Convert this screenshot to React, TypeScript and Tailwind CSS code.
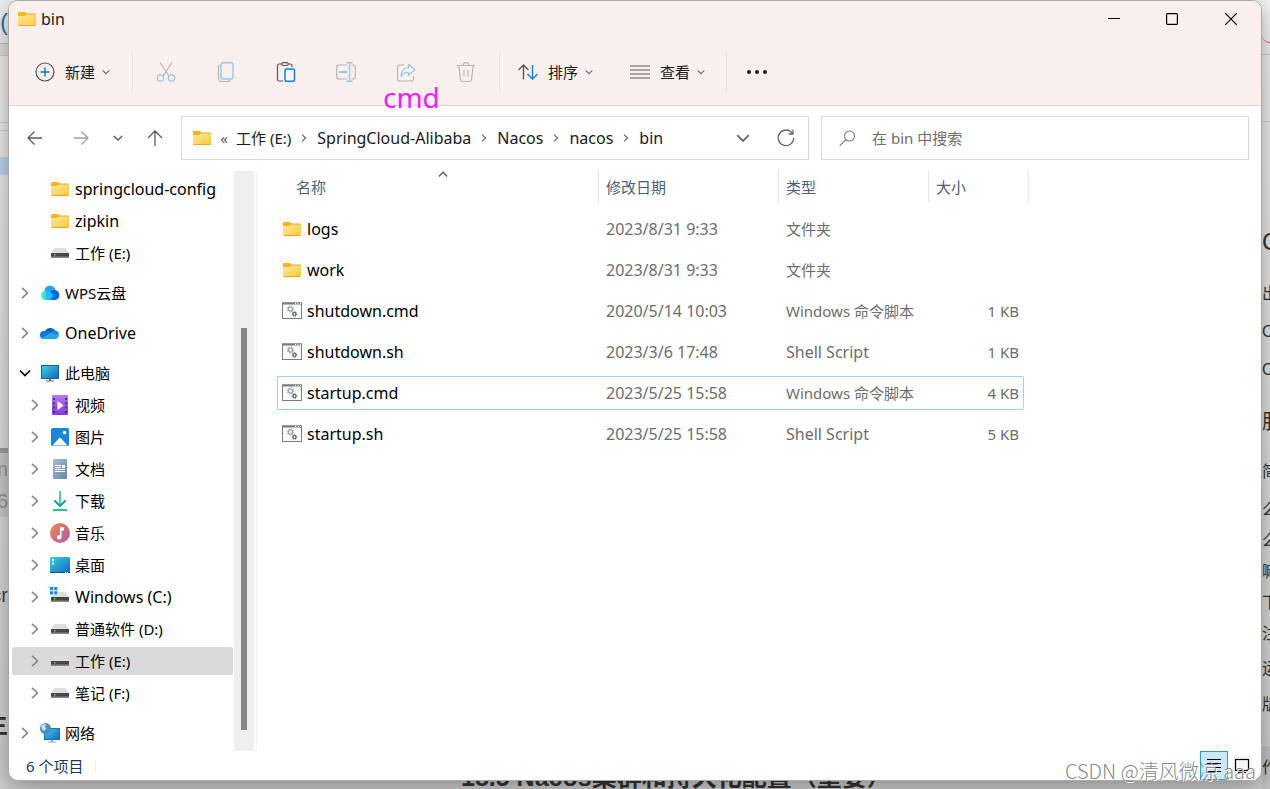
import React from 'react';
import { clsx } from 'clsx';

interface IconProps {
  className?: string;
}

const Chevron = ({ d, className, size = 12 }: IconProps & { d: string; size?: number }) => (
  <svg width={size} height={size} viewBox="0 0 12 12" fill="none" stroke="currentColor" strokeWidth="1.6" className={clsx('shrink-0', className)}>
    <path d={d} />
  </svg>
);

const RIGHT = 'M3 .8 8.500 6 3 11.200';
const DOWN = 'M1 3.500 6 8.500 11 3.500';
const UP = 'M1 6.500 6 1.500 11 6.500';

const FolderIcon = () => (
  <svg width="20" height="20" viewBox="0 0 20 20" className="shrink-0">
    <defs>
      <linearGradient id="folder" x1="0" y1="0" x2="1" y2="1">
        <stop offset="0" stopColor="#ffe8a0" />
        <stop offset="1" stopColor="#ffca3a" />
      </linearGradient>
    </defs>
    <path d="M1 4q0-1 1-1h6l1.500 1.500V7H1z" fill="#f9b515" />
    <path d="M9 4.500h9q1 0 1 1V7H9z" fill="#e9a91c" />
    <path d="M1 7h6.500l1.500-1.500h10V15.500q0 1-1 1H2q-1 0-1-1z" fill="url(#folder)" />
    <path d="M1.300 16.500h17.400" stroke="#e8a82e" />
  </svg>
);

const DriveIcon = ({ windows = false }: { windows?: boolean }) => (
  <svg width="20" height="20" viewBox="0 0 20 20" className="shrink-0">
    <path d="M4.500 5h11l3.500 5H1z" fill="#dedee2" />
    <path d="M1 10h18v4H1z" fill="#454545" />
    <path d="M1 13.500h18v1.500H1z" fill="#8a8a8a" />
    <path d="M4 11h1.500v1.500H4z" fill="#3ee65a" />
    {windows && (
      <>
        <path d="M0 0h8.500v8H0z" fill="#fff" />
        <path d="M0 0h3.200v3.200H0zM4.200 0h3.200v3.200H4.200zM0 4.200h3.200v3.200H0zM4.200 4.200h3.200v3.200H4.200z" fill="#1193dd" />
      </>
    )}
  </svg>
);

const WpsIcon = () => (
  <svg width="20" height="20" viewBox="0 0 20 20" className="shrink-0">
    <defs>
      <linearGradient id="wps" x1="0" y1="0" x2="1" y2="0">
        <stop offset="0" stopColor="#4df0b8" />
        <stop offset="1" stopColor="#12b5fa" />
      </linearGradient>
    </defs>
    <circle cx="10" cy="8" r="5.500" fill="#1fa5f5" />
    <circle cx="14.300" cy="12" r="5" fill="#0a63e0" />
    <path d="M5.500 17a4.700 4.700 0 1 1 3-8.500l5 6Q15 17 12 17z" fill="url(#wps)" />
    <path d="M11 17h4q3-.3 4-3l-6-5.500-4 4z" fill="#0b6cea" />
    <path d="M6 8.200Q9 7 11.500 10L13.500 13 9.500 17H6z" fill="#1cc0f6" />
  </svg>
);

const OneDriveIcon = () => (
  <svg width="20" height="20" viewBox="0 0 20 20" className="shrink-0">
    <path d="M5 8a6 6 0 0 1 10.500 0l-5 4z" fill="#0a5fb4" />
    <path d="M4 16A4 4 0 0 1 4 8q3-1 6 1l5 3-9 4z" fill="#0f79d3" />
    <path d="M15 7.500A4.400 4.400 0 0 1 16 16H4q-1.500 0-2.500-1L12 9.500z" fill="#2aa5ec" />
    <path d="M10 9q2-2 5-1.500 3 .3 4 3l-4 1.500z" fill="#1688dc" />
  </svg>
);

const PcIcon = () => (
  <svg width="20" height="20" viewBox="0 0 20 20" className="shrink-0">
    <defs>
      <linearGradient id="screen" x1="0" y1="0" x2="1" y2="1">
        <stop offset="0" stopColor="#39d2e4" />
        <stop offset="1" stopColor="#1268bc" />
      </linearGradient>
    </defs>
    <rect x="1.500" y="2.500" width="17" height="13" fill="url(#screen)" stroke="#17618c" />
    <path d="M9 16h2v1.500h3v1H6v-1h3z" fill="#5d6d78" />
  </svg>
);

const VideoIcon = () => (
  <svg width="20" height="20" viewBox="0 0 20 20" className="shrink-0">
    <defs>
      <linearGradient id="video" x1="0" y1="0" x2="0" y2="1">
        <stop offset="0" stopColor="#b679f5" />
        <stop offset="1" stopColor="#8438dc" />
      </linearGradient>
    </defs>
    <rect x="2" y="0" width="16" height="20" rx="1" fill="url(#video)" />
    <path d="M4 3v15M16 3v15" stroke="#3a1a68" strokeWidth="1.500" strokeDasharray="2 2.300" />
    <path d="M7.500 6v9l6-4.500z" fill="#fff" />
  </svg>
);

const PictureIcon = () => (
  <svg width="20" height="20" viewBox="0 0 20 20" className="shrink-0">
    <rect x="1" y="1" width="18" height="18" rx="1.500" fill="#1487d9" />
    <path d="M2.500 18.500 9.300 11q.7-.8 1.400 0l6.800 7.500z" fill="#fff" />
    <circle cx="14.500" cy="5.500" r="1.700" fill="#fff" />
  </svg>
);

const DocIcon = () => (
  <svg width="20" height="20" viewBox="0 0 20 20" className="shrink-0">
    <defs>
      <linearGradient id="doc" x1="0" y1="0" x2="1" y2="1">
        <stop offset="0" stopColor="#a9bdd2" />
        <stop offset="1" stopColor="#6784a2" />
      </linearGradient>
    </defs>
    <rect x="3" y="0" width="14" height="20" rx="1" fill="url(#doc)" />
    <path d="M5 6.500h6M5 8.500h6M5 10.500h10M5 12.500h10" stroke="#fff" />
    <path d="M12 6h3v3h-3z" fill="#fff" />
  </svg>
);

const DownloadIcon = () => (
  <svg width="20" height="20" viewBox="0 0 20 20" fill="none" className="shrink-0">
    <path d="M10 0v15" stroke="#2bbd95" strokeWidth="1.600" />
    <path d="M4.500 9.500 10 15l5.500-5.500" stroke="#15a08c" strokeWidth="2" />
    <path d="M3 19h14" stroke="#2fc08e" strokeWidth="2" />
  </svg>
);

const MusicIcon = () => (
  <svg width="20" height="20" viewBox="0 0 20 20" className="shrink-0">
    <defs>
      <linearGradient id="music" x1="0" y1="0" x2="1" y2="1">
        <stop offset="0" stopColor="#f28a4e" />
        <stop offset="1" stopColor="#a95aa8" />
      </linearGradient>
    </defs>
    <circle cx="10" cy="10" r="10" fill="url(#music)" />
    <path d="M10 4v8.300a2.300 2.200 0 1 0 1.500 2V7.500H14V4.500z" fill="#fff" />
  </svg>
);

const DesktopIcon = () => (
  <svg width="20" height="20" viewBox="0 0 20 20" className="shrink-0">
    <rect x="0" y="2" width="20" height="16" rx="1" fill="url(#screen)" />
    <path d="M0 17h20v1H0z" fill="#0d518f" />
    <path d="M2 4h2v2H2zM2 7.500h2v2H2zM15 17h1v1h-1zM17 17h1v1h-1z" fill="#fff" />
  </svg>
);

const NetworkIcon = () => (
  <svg width="20" height="20" viewBox="0 0 20 20" className="shrink-0">
    <rect x="4.500" y="5.500" width="15" height="11" fill="url(#screen)" stroke="#1874a8" />
    <path d="M11 17h2v1.500h3v1H8v-1h3z" fill="#9aa5ad" />
    <circle cx="5.500" cy="5.500" r="5.500" fill="#4f8db8" />
    <path d="M1 3q3-3 5-1.500L5 4l1.500 1.500L4 8Q1 6 1 3z" fill="#c5dfec" />
  </svg>
);

const ScriptIcon = () => (
  <svg width="20" height="20" viewBox="0 0 20 20" fill="none" className="shrink-0">
    <rect x=".5" y="2" width="19" height="15.500" fill="#fafafa" stroke="#7b7b79" />
    <path d="M0 2.500h20" stroke="#7b7b79" strokeWidth="2" />
    <path d="M13 2.500h6" stroke="#fff" strokeDasharray="1 1.500" />
    <circle cx="8.500" cy="8" r="2.100" stroke="#9aa3ad" strokeWidth="1.300" />
    <circle cx="8.500" cy="8" r="3.200" stroke="#9aa3ad" strokeDasharray="1.200 1.310" />
    <circle cx="12.500" cy="13" r="1.500" stroke="#555d63" strokeWidth="1.200" />
    <circle cx="12.500" cy="13" r="2.300" stroke="#555d63" strokeDasharray=".9 .900" />
  </svg>
);

const tool = { width: 20, height: 20, viewBox: '0 0 20 20', fill: 'none', strokeWidth: 1.2, className: 'shrink-0' };

const PlusCircle = () => (
  <svg {...tool}>
    <circle cx="10" cy="10" r="9" stroke="#55504f" />
    <path d="M10 5.500v9M5.500 10h9" stroke="#0a72cc" strokeWidth="1.400" />
  </svg>
);

const CutIcon = () => (
  <svg {...tool}>
    <path d="M4 .5 13 14M16 .5 7 14" stroke="#bab4b3" />
    <circle cx="4.500" cy="16" r="3.200" stroke="#97c6ea" />
    <circle cx="15.500" cy="16" r="3.200" stroke="#97c6ea" />
  </svg>
);

const CopyIcon = () => (
  <svg {...tool}>
    <path d="M4 3Q2.500 3.500 2.500 5v11q0 3.500 3.500 3.500h5.500q2 0 2.500-1.500" stroke="#bab4b3" />
    <rect x="5" y=".7" width="12" height="16.300" rx="2" stroke="#97c6ea" strokeWidth="1.400" />
  </svg>
);

const PasteIcon = () => (
  <svg {...tool}>
    <path d="M6 2H3Q1.500 2 1.500 3.500v14Q1.500 19 3 19h4M12 2h2.500Q16 2 16 3.500V5" stroke="#5d5857" />
    <rect x="5.700" y=".7" width="6.600" height="2.800" rx="1.400" stroke="#5d5857" />
    <rect x="9" y="7" width="9.500" height="12.300" rx="1.500" fill="#f4f8fd" stroke="#0f7fdb" strokeWidth="1.500" />
  </svg>
);

const RenameIcon = () => (
  <svg {...tool}>
    <path d="M11 3H3Q.7 3 .7 5v9.500Q.7 17 3 17h8M15.500 3h1.500q2.300 0 2.300 2v9.500q0 2.500-2.300 2.500h-1.500" stroke="#bab4b3" />
    <path d="M3 10h8" stroke="#97c6ea" strokeWidth="2" />
    <path d="M13.500 .7v18.600M10.500.7h6M10.500 19.300h6" stroke="#97c6ea" strokeWidth="1.400" />
  </svg>
);

const ShareIcon = () => (
  <svg {...tool}>
    <path d="M8 3H4Q1.500 3 1.500 5.500v11Q1.500 19 4 19h11q2.500 0 2.500-2.500V14" stroke="#bab4b3" />
    <path d="M12.500 2.300 19 7.800l-6.500 5.500V10.500Q8 10 5 14.500 5.500 6 12.500 5.500z" stroke="#97c6ea" strokeLinejoin="round" />
  </svg>
);

const TrashIcon = () => (
  <svg {...tool} stroke="#bab4b3">
    <path d="M1 3.500h18M7 3.500Q7 .7 10 .7t3 2.800M2.800 3.500 4.500 17.500q.3 2 2 2h7q1.700 0 2-2L17.200 3.500M8 8v6.500M12 8v6.500" />
  </svg>
);

const SortIcon = () => (
  <svg {...tool} strokeWidth={1.4}>
    <path d="M5.500 17.500V3M.5 8 5.500 3l5 5" stroke="#5d5857" />
    <path d="M14.500 3v14M9.500 12l5 5 5-5" stroke="#0f7fdb" />
  </svg>
);

const ViewIcon = () => (
  <svg {...tool} stroke="#5d5857">
    <path d="M0 4h20M0 8h20M0 12h20M0 16h20" />
  </svg>
);

const MoreIcon = () => (
  <svg {...tool} fill="#1a1a1a">
    <circle cx="2" cy="10" r="2" />
    <circle cx="10" cy="10" r="2" />
    <circle cx="18" cy="10" r="2" />
  </svg>
);

const Arrow = ({ d, className }: IconProps & { d: string }) => (
  <svg width="16" height="16" viewBox="0 0 16 16" fill="none" stroke="currentColor" strokeWidth="1.3" className={clsx('shrink-0', className)}>
    <path d={d} />
  </svg>
);

const tools = [
  { label: '剪切', icon: <CutIcon />, disabled: true },
  { label: '复制', icon: <CopyIcon />, disabled: true },
  { label: '粘贴', icon: <PasteIcon />, disabled: false },
  { label: '重命名', icon: <RenameIcon />, disabled: true },
  { label: '共享', icon: <ShareIcon />, disabled: true },
  { label: '删除', icon: <TrashIcon />, disabled: true },
];

interface TreeItem {
  label: string;
  icon: React.ReactNode;
  arrow?: 'right' | 'down';
  child?: boolean;
  selected?: boolean;
}

const tree: TreeItem[][] = [
  [
    { label: 'springcloud-config', icon: <FolderIcon />, child: true },
    { label: 'zipkin', icon: <FolderIcon />, child: true },
    { label: '工作 (E:)', icon: <DriveIcon />, child: true },
  ],
  [{ label: 'WPS云盘', icon: <WpsIcon />, arrow: 'right' }],
  [{ label: 'OneDrive', icon: <OneDriveIcon />, arrow: 'right' }],
  [
    { label: '此电脑', icon: <PcIcon />, arrow: 'down' },
    { label: '视频', icon: <VideoIcon />, arrow: 'right', child: true },
    { label: '图片', icon: <PictureIcon />, arrow: 'right', child: true },
    { label: '文档', icon: <DocIcon />, arrow: 'right', child: true },
    { label: '下载', icon: <DownloadIcon />, arrow: 'right', child: true },
    { label: '音乐', icon: <MusicIcon />, arrow: 'right', child: true },
    { label: '桌面', icon: <DesktopIcon />, arrow: 'right', child: true },
    { label: 'Windows (C:)', icon: <DriveIcon windows />, arrow: 'right', child: true },
    { label: '普通软件 (D:)', icon: <DriveIcon />, arrow: 'right', child: true },
    { label: '工作 (E:)', icon: <DriveIcon />, arrow: 'right', child: true, selected: true },
    { label: '笔记 (F:)', icon: <DriveIcon />, arrow: 'right', child: true },
  ],
  [{ label: '网络', icon: <NetworkIcon />, arrow: 'right' }],
];

const files = [
  { name: 'logs', date: '2023/8/31 9:33', type: '文件夹', size: '' },
  { name: 'work', date: '2023/8/31 9:33', type: '文件夹', size: '' },
  { name: 'shutdown.cmd', date: '2020/5/14 10:03', type: 'Windows 命令脚本', size: '1 KB' },
  { name: 'shutdown.sh', date: '2023/3/6 17:48', type: 'Shell Script', size: '1 KB' },
  { name: 'startup.cmd', date: '2023/5/25 15:58', type: 'Windows 命令脚本', size: '4 KB', focused: true },
  { name: 'startup.sh', date: '2023/5/25 15:58', type: 'Shell Script', size: '5 KB' },
];

const crumbs = ['工作 (E:)', 'SpringCloud-Alibaba', 'Nacos', 'nacos', 'bin'];

// Latin-only labels are set one step larger than Chinese ones
const textSize = (text: string) => (/^[ -~]+$/.test(text) ? 'text-base leading-5' : 'text-[15px] leading-5');

const TitleBar = () => (
  <div className="flex h-9 items-center justify-between pl-2">
    <div className="flex items-center gap-1">
      <FolderIcon />
      <span className="text-base leading-5">bin</span>
    </div>
    <div className="flex h-full text-black">
      <button aria-label="最小化" className="flex w-[58px] items-center justify-center">
        <svg width="12" height="12" viewBox="0 0 12 12" stroke="currentColor"><path d="M0 5.500h12" /></svg>
      </button>
      <button aria-label="最大化" className="flex w-[58px] items-center justify-center">
        <svg width="12" height="12" viewBox="0 0 12 12" fill="none" stroke="currentColor" strokeWidth="1.200"><rect x=".6" y=".6" width="10.800" height="10.800" rx="1" /></svg>
      </button>
      <button aria-label="关闭" className="flex w-[60px] items-center justify-center">
        <svg width="12" height="12" viewBox="0 0 12 12" stroke="currentColor" strokeWidth="1.200"><path d="m0 0 12 12M12 0 0 12" /></svg>
      </button>
    </div>
  </div>
);

const MenuButton = ({ icon, label }: { icon: React.ReactNode; label: string }) => (
  <button className="flex items-center gap-[10px]">
    {icon}
    <span className="flex items-center gap-[7px]">
      {label}
      <Chevron d={DOWN} size={8} className="text-[#6b6665]" />
    </span>
  </button>
);

const Divider = () => <div className="h-10 w-px bg-[#e8e0de]" />;

const Toolbar = () => (
  <div className="relative flex h-[69px] items-center border-b border-[#dfdad8] pl-[26px] pt-0.5">
    <MenuButton icon={<PlusCircle />} label="新建" />
    <div className="ml-[22px] mr-[3px]"><Divider /></div>
    {tools.map((t) => (
      <button key={t.label} aria-label={t.label} disabled={t.disabled} className="flex h-10 w-[60px] items-center justify-center">
        {t.icon}
      </button>
    ))}
    <div className="ml-[3px] mr-[18px]"><Divider /></div>
    <MenuButton icon={<SortIcon />} label="排序" />
    <div className="ml-[37px]"><MenuButton icon={<ViewIcon />} label="查看" /></div>
    <div className="ml-[21px] mr-5"><Divider /></div>
    <button aria-label="更多"><MoreIcon /></button>
    <span className="absolute left-[374px] top-[42px] text-[28px] leading-9 text-[#f81cf5]">cmd</span>
  </div>
);

const NavBar = () => (
  <div className="flex h-[65px] items-start gap-3 pl-[18px] pr-3 pt-[10px]">
    <div className="flex h-11 w-[142px] items-center text-[#5c5c5c]">
      <button aria-label="后退" className="w-[46px]"><Arrow d="M15 8H1M7.500 1.500 1 8l6.500 6.500" /></button>
      <button aria-label="前进" className="w-10 text-[#a0a0a0]"><Arrow d="M1 8h14M8.500 1.500 15 8l-6.500 6.500" /></button>
      <button aria-label="最近" className="w-[34px]"><Chevron d={DOWN} size={10} /></button>
      <button aria-label="向上"><Arrow d="M8 16V1M1 8l7-7 7 7" /></button>
    </div>
    <div className="flex h-11 flex-1 items-center border border-[#d9d9d9] bg-white pl-[10px] pr-3">
      <FolderIcon />
      <span className="w-6 text-center leading-5 text-[#5c5c5c]">«</span>
      <nav className="flex flex-1 items-center">
        {crumbs.map((c, i) => (
          <React.Fragment key={i}>
            {i > 0 && <Chevron d={RIGHT} size={8} className="mx-[9px] text-[#5c5c5c]" />}
            <a href="#" className={clsx('whitespace-nowrap', textSize(c))}>{c}</a>
          </React.Fragment>
        ))}
      </nav>
      <button aria-label="历史" className="mr-[26px] text-[#6b6b6b]"><Chevron d={DOWN} size={14} /></button>
      <button aria-label="刷新" className="text-[#6b6b6b]">
        <svg width="20" height="20" viewBox="0 0 20 20" fill="none" stroke="currentColor" strokeWidth="1.300">
          <path d="M16.500 5.500A7.800 7.800 0 1 0 17.800 10M17 1.500v4.500h-4.500" />
        </svg>
      </button>
    </div>
    <label className="flex h-11 w-[428px] items-center gap-4 border border-[#d9d9d9] bg-white pl-[17px]">
      <svg width="17" height="17" viewBox="0 0 17 17" fill="none" stroke="#7a7a7a" strokeWidth="1.100" className="shrink-0">
        <circle cx="10.500" cy="6" r="5" />
        <path d="M7 9.500.8 15.700" />
      </svg>
      <input type="text" aria-label="搜索" placeholder="在 bin 中搜索" className="min-w-0 flex-1 outline-none placeholder:text-[#6e6e6e]" />
    </label>
  </div>
);

const Sidebar = () => (
  <aside className="flex w-[245px] shrink-0">
    <nav className="flex flex-1 flex-col gap-3 pl-[3px] pr-px pt-1">
      {tree.map((group, g) => (
        <div key={g} className="flex flex-col gap-1">
          {group.map((item) => (
            <a
              key={item.label}
              href="#"
              className={clsx(
                'flex h-7 items-center gap-[5px] whitespace-nowrap rounded-xs text-black',
                textSize(item.label),
                item.child ? 'pl-[13px]' : 'pl-[3px]',
                item.selected && 'bg-[#d9d9d9]'
              )}
            >
              <span className="flex w-5 justify-center">
                {item.arrow === 'right' && <Chevron d={RIGHT} className="text-[#858585]" />}
                {item.arrow === 'down' && <Chevron d={DOWN} className="text-black" />}
              </span>
              {item.icon}
              {item.label}
            </a>
          ))}
        </div>
      ))}
    </nav>
    <div className="flex w-5 flex-col items-center bg-[#efefef] pb-[21px] pt-[157px]">
      <div className="w-[6px] flex-1 bg-[#858585]" />
    </div>
  </aside>
);

const FileTable = () => (
  <div className="ml-0.5 flex-1 border-l border-[#f3f3f3] pl-5">
    <table className="w-[752px] table-fixed border-separate border-spacing-0 text-left">
      <thead>
        <tr className="text-[#4c607a]">
          <th className="relative w-[322px] p-0 pb-[9px] font-normal">
            <div className="flex h-8 items-center border-r border-[#e5e5e5] pl-[19px]">名称</div>
            <Chevron d={UP} size={10} className="absolute left-[161px] top-0 text-[#5c5c5c]" />
          </th>
          <th className="w-[180px] p-0 pb-[9px] font-normal">
            <div className="flex h-8 items-center border-r border-[#e5e5e5] pl-[7px]">修改日期</div>
          </th>
          <th className="w-[150px] p-0 pb-[9px] font-normal">
            <div className="flex h-8 items-center border-r border-[#e5e5e5] pl-[7px]">类型</div>
          </th>
          <th className="w-[100px] p-0 pb-[9px] font-normal">
            <div className="flex h-8 items-center border-r border-[#e5e5e5] pl-[7px]">大小</div>
          </th>
        </tr>
      </thead>
      <tbody>
        {files.map((f) => {
          const line = f.focused ? 'border-[#99d1ff]' : 'border-transparent';
          return (
            <tr key={f.name} className="text-[#6d6d6d]">
              <td className="p-0 pb-[7px]">
                <div className={clsx('flex h-[34px] items-center gap-[5px] rounded-l-xs border-y border-l pl-1 text-black', textSize(f.name), line)}>
                  {f.size ? <ScriptIcon /> : <FolderIcon />}
                  {f.name}
                </div>
              </td>
              <td className="p-0 pb-[7px]">
                <div className={clsx('flex h-[34px] items-center border-y pl-[7px]', textSize(f.date), line)}>{f.date}</div>
              </td>
              <td className="p-0 pb-[7px]">
                <div className={clsx('flex h-[34px] items-center border-y pl-[7px]', textSize(f.type), line)}>{f.type}</div>
              </td>
              <td className="p-0 pb-[7px]">
                <div className={clsx('mr-[5px] flex h-[34px] items-center justify-end rounded-r-xs border-y border-r pr-1', line)}>{f.size}</div>
              </td>
            </tr>
          );
        })}
      </tbody>
    </table>
  </div>
);

const StatusBar = () => (
  <footer className="flex h-[29px] items-center justify-between pl-[17px] pr-[9px]">
    <div className="flex items-center gap-3 text-[#1e395b]">
      <span>6 个项目</span>
      <div className="h-3 w-px bg-[#ececec]" />
    </div>
    <div className="flex h-full items-start gap-1">
      <button aria-label="详细信息" className="flex h-full w-7 items-center justify-center border border-[#26a0da] bg-[#cde8f6]">
        <svg width="16" height="16" viewBox="0 0 16 16" stroke="#000"><path d="M1 1.500h14M1 5.500h14M1 9.500h14M1 13.500h14" /></svg>
      </button>
      <button aria-label="大图标" className="mt-1 flex h-5 w-5 items-center justify-center bg-[#f6f6f6]">
        <svg width="16" height="16" viewBox="0 0 16 16" fill="none" stroke="#000" strokeWidth="1.200"><rect x="1.500" y="2.500" width="13" height="11" /><path d="M4 15.500h8" /></svg>
      </button>
    </div>
  </footer>
);

// Slivers of the web page that stay visible around the window
const leftStrip = [
  { text: '(', box: 'h-11 bg-[#f0f0f0] border-b border-[#bdbdbd] text-2xl text-[#2f6fa8]' },
  { text: '', box: 'h-3 bg-[#dedede] border-b border-[#cfcfcf]' },
  { text: '', box: 'h-[67px] border-b border-[#cfcfcf]' },
  { text: '', box: 'h-2 border-b border-[#cfcfcf]' },
  { text: '', box: 'mt-[26px] h-[18px] bg-[#bcd6ee]' },
  { text: '', box: 'mt-[273px] h-[5px] bg-[#a0a0a0]' },
  { text: 'm', box: 'h-8 bg-[#cacaca] text-xl text-[#9a9292]' },
  { text: '6', box: 'h-8 bg-[#cacaca] text-xl text-[#9a9292]' },
  { text: 'cr', box: 'mt-[62px] h-8 text-xl text-[#444]' },
  { text: '主', box: 'mt-[98px] h-8 text-2xl font-bold text-[#333]' },
];

const rightStrip = [
  { text: '', box: 'h-[43px] bg-[#f5f5f5] border-b border-[#f0604a] rounded-bl-lg' },
  { text: '', box: 'h-3 border-b border-[#cfcfcf]' },
  { text: '', box: 'h-[67px] border-b border-[#cfcfcf]' },
  { text: 'C', box: 'mt-[108px] h-6 text-2xl' },
  { text: '出', box: 'mt-7 h-6' },
  { text: 'C', box: 'mt-[14px] h-6' },
  { text: 'C', box: 'mt-[14px] h-6' },
  { text: '服', box: 'mt-7 h-6 text-xl' },
  { text: '简', box: 'mt-[26px] h-6' },
  { text: '么', box: 'mt-[14px] h-6' },
  { text: '么', box: 'mt-[7px] h-6' },
  { text: '嘛', box: 'mt-[7px] h-6' },
  { text: '下', box: 'mt-[7px] h-6' },
  { text: '注', box: 'mt-[7px] h-6' },
  { text: '运', box: 'mt-[11px] h-6' },
  { text: '版', box: 'mt-3 h-6' },
  { text: '作', box: 'mt-[29px] h-[43px] bg-[#c4c4c4]' },
];

export default function App() {
  return (
    <div className="relative flex h-screen min-h-[789px] flex-col overflow-hidden bg-linear-to-b from-[#f2f2f2] to-[#cfcfcf] font-['Noto_Sans','Noto_Sans_CJK_SC',sans-serif] text-[15px] leading-5 text-[#1a1a1a]">
      <div className="flex min-h-0 flex-1">
        <div className="w-2 shrink-0 font-['Liberation_Sans','Noto_Sans_CJK_SC',sans-serif]" aria-hidden="true">
          {leftStrip.map((s, i) => (
            <div key={i} className={clsx('flex items-center justify-end overflow-hidden', s.box)}>{s.text}</div>
          ))}
        </div>

        <main className="z-10 flex min-w-0 flex-1 flex-col overflow-hidden rounded-[10px] border border-[#a9a9a9] bg-white shadow-[0_6px_24px_rgba(0,0,0,0.35)]">
          <header className="bg-[#f9f0ee]">
            <TitleBar />
            <Toolbar />
          </header>
          <NavBar />
          <div className="flex min-h-0 flex-1">
            <Sidebar />
            <FileTable />
          </div>
          <StatusBar />
        </main>

        <div className="w-2 shrink-0 font-['Liberation_Sans','Noto_Sans_CJK_SC',sans-serif] text-base text-[#333]" aria-hidden="true">
          {rightStrip.map((s, i) => (
            <div key={i} className={clsx('flex items-center overflow-hidden', s.box)}>{s.text}</div>
          ))}
        </div>
      </div>

      <div className="flex h-2 shrink-0 items-end overflow-hidden pl-[461px] font-['Liberation_Sans','Noto_Sans_CJK_SC',sans-serif] text-[25px] leading-6 font-bold whitespace-nowrap text-[#333]" aria-hidden="true">
        18.5 Nacos集群和持久化配置（重要）
      </div>

      <div className="absolute bottom-1 right-[14px] z-20 font-['Noto_Sans_CJK_SC',sans-serif] text-xl leading-7 font-light text-[#8a8a8a] [text-shadow:1px_1px_0_#fff]">
        CSDN @清风微凉 aaa
      </div>
    </div>
  );
}
